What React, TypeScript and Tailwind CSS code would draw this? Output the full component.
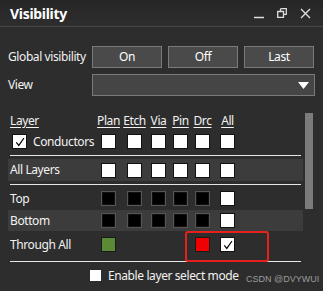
import React from 'react';

const COLS = ['w-[25px]', 'w-[27px]', 'w-[21px]', 'w-[23px]', 'w-[21px]', 'w-[29px]'];
const HEADS = ['Plan', 'Etch', 'Via', 'Pin', 'Drc', 'All'];

type Kind = 'white' | 'black' | 'green' | 'red' | 'checked' | 'none';

const Tick: React.FC<{ size?: number }> = ({ size = 13 }) => (
  <svg width={size} height={size} viewBox="0 0 13 13">
    <path d="M2.5 7 L5.2 10.2 L10.8 2.2" fill="none" stroke="#000" strokeWidth="1.3" />
  </svg>
);

const Box: React.FC<{ kind: Kind }> = ({ kind }) => {
  if (kind === 'none') return null;
  if (kind === 'black')
    return <div className="w-[15px] h-[15px] bg-black border border-[#555] shadow-[inset_0_0_0_1px_#111]" />;
  if (kind === 'green') return <div className="w-[15px] h-[15px] bg-[#5b8a36] border border-[#1a1a1a]" />;
  if (kind === 'red') return <div className="w-[15px] h-[15px] bg-[#f00000] border border-[#1a1a1a]" />;
  return (
    <div className="w-[15px] h-[15px] bg-white border border-[#111] flex items-center justify-center">
      {kind === 'checked' && <Tick size={12} />}
    </div>
  );
};

const Cells: React.FC<{ kinds: Kind[] }> = ({ kinds }) => (
  <div className="flex">
    {kinds.map((k, i) => (
      <div key={i} className={`${COLS[i]} flex justify-center`}>
        <Box kind={k} />
      </div>
    ))}
  </div>
);

const Rule = () => <div className="mx-[2px] h-px bg-[#e6e6e6]" />;

const Btn: React.FC<{ children: React.ReactNode }> = ({ children }) => (
  <button className="w-[70px] h-[22px] bg-[#4a4a4a] border border-[#7a7a7a] text-white text-[12px] leading-none">
    {children}
  </button>
);

const App: React.FC = () => {
  const white6: Kind[] = ['white', 'white', 'white', 'white', 'white', 'white'];
  const dark6: Kind[] = ['black', 'black', 'black', 'black', 'black', 'white'];

  return (
    <div className="w-[323px] h-[291px] bg-[#2d2d2d] text-[#f2f2f2] overflow-hidden font-['Noto_Sans',sans-serif] text-[12px] tracking-[-0.4px] relative">
      {/* title bar */}
      <div className="h-[27px] flex items-center px-[10px] bg-[linear-gradient(#262626,#2e2e2e)] border-b border-[#464646]">
        <span className="font-bold text-[14px] text-white tracking-[-0.3px]">Visibility</span>
        <div className="ml-auto flex items-center">
          <svg width="12" height="12" viewBox="0 0 12 12" className="mr-[12px]">
            <path d="M1 10.5 H11" stroke="#ddd" strokeWidth="1.5" />
          </svg>
          <svg width="10" height="10" viewBox="0 0 10 10" className="mr-[13px]">
            <path d="M3.5 0.7 H9.3 V6.3 H7 M0.7 3.5 H6.5 V9.3 H0.7 Z M3.5 0.7 V3.5" fill="none" stroke="#ddd" strokeWidth="1.3" />
          </svg>
          <svg width="11" height="11" viewBox="0 0 11 11" className="mr-[2px]">
            <path d="M1 1 L10 10 M10 1 L1 10" stroke="#ddd" strokeWidth="1.4" />
          </svg>
        </div>
      </div>

      {/* global visibility */}
      <div className="mt-[19px] flex items-center h-[22px]">
        <span className="w-[92px] pl-[8px] whitespace-nowrap">Global visibility</span>
        <div className="flex gap-[6px]">
          <Btn>On</Btn>
          <Btn>Off</Btn>
          <Btn>Last</Btn>
        </div>
      </div>

      {/* view */}
      <div className="mt-[6px] flex items-center h-[22px]">
        <span className="w-[92px] pl-[8px]">View</span>
        <div className="w-[223px] h-[22px] bg-[#454545] border border-[#7a7a7a] flex items-center justify-end pr-[5px]">
          <svg width="11" height="7" viewBox="0 0 11 7">
            <path d="M0 0 H11 L5.5 7 Z" fill="#fff" />
          </svg>
        </div>
      </div>

      {/* layer list */}
      <div className="mt-[15px] flex">
        <div className="ml-[8px] w-[295px]">
          <div className="h-[20px] flex items-center">
            <span className="w-[88px] pl-[2px] underline underline-offset-[2px]">Layer</span>
            <div className="flex">
              {HEADS.map((h, i) => (
                <div key={h} className={`${COLS[i]} flex justify-center`}>
                  <span className="underline underline-offset-[2px]">{h}</span>
                </div>
              ))}
            </div>
          </div>

          <div className="h-[21px] flex items-center">
            <div className="w-[88px] pl-[4px] flex items-center gap-[6px]">
              <Box kind="checked" />
              <span>Conductors</span>
            </div>
            <Cells kinds={white6} />
          </div>

          <div className="mt-[3px]">
            <Rule />
          </div>

          <div className="mt-[3px] h-[22px] bg-[#3c3c3c] flex items-center">
            <span className="w-[88px] pl-[2px]">All Layers</span>
            <Cells kinds={white6} />
          </div>

          <div className="mt-[3px]">
            <Rule />
          </div>

          <div className="h-[25px] pt-[2px] flex items-center">
            <span className="w-[88px] pl-[2px]">Top</span>
            <Cells kinds={dark6} />
          </div>

          <div className="h-[21px] bg-[#3c3c3c] flex items-center">
            <span className="w-[88px] pl-[2px]">Bottom</span>
            <Cells kinds={dark6} />
          </div>

          <div className="h-[27px] flex items-center relative">
            <span className="w-[88px] pl-[2px]">Through All</span>
            <Cells kinds={['green', 'none', 'none', 'none', 'red', 'checked']} />
            <div className="absolute left-[177px] top-0 w-[84px] h-[31px] border-2 border-[#e5211d] rounded-[3px]" />
          </div>

          <div className="mt-[3px]">
            <Rule />
          </div>
        </div>

        <div className="ml-[2px] w-[8px]">
          <div className="mt-[2px] h-[96px] bg-[#7b7b7b]" />
        </div>
      </div>

      {/* enable select mode */}
      <div className="h-[23px] mt-[2px] flex items-center pl-[90px]">
        <div className="w-[11px] h-[11px] bg-white" />
        <span className="ml-[7px]">Enable layer select mode</span>
      </div>

      <span className="absolute left-[246px] top-[273px] whitespace-nowrap text-[9px] leading-[12px] tracking-normal text-[#9c9c9c] font-['Liberation_Sans',sans-serif]">
        CSDN @DVYWUI
      </span>
    </div>
  );
};

export default App;
